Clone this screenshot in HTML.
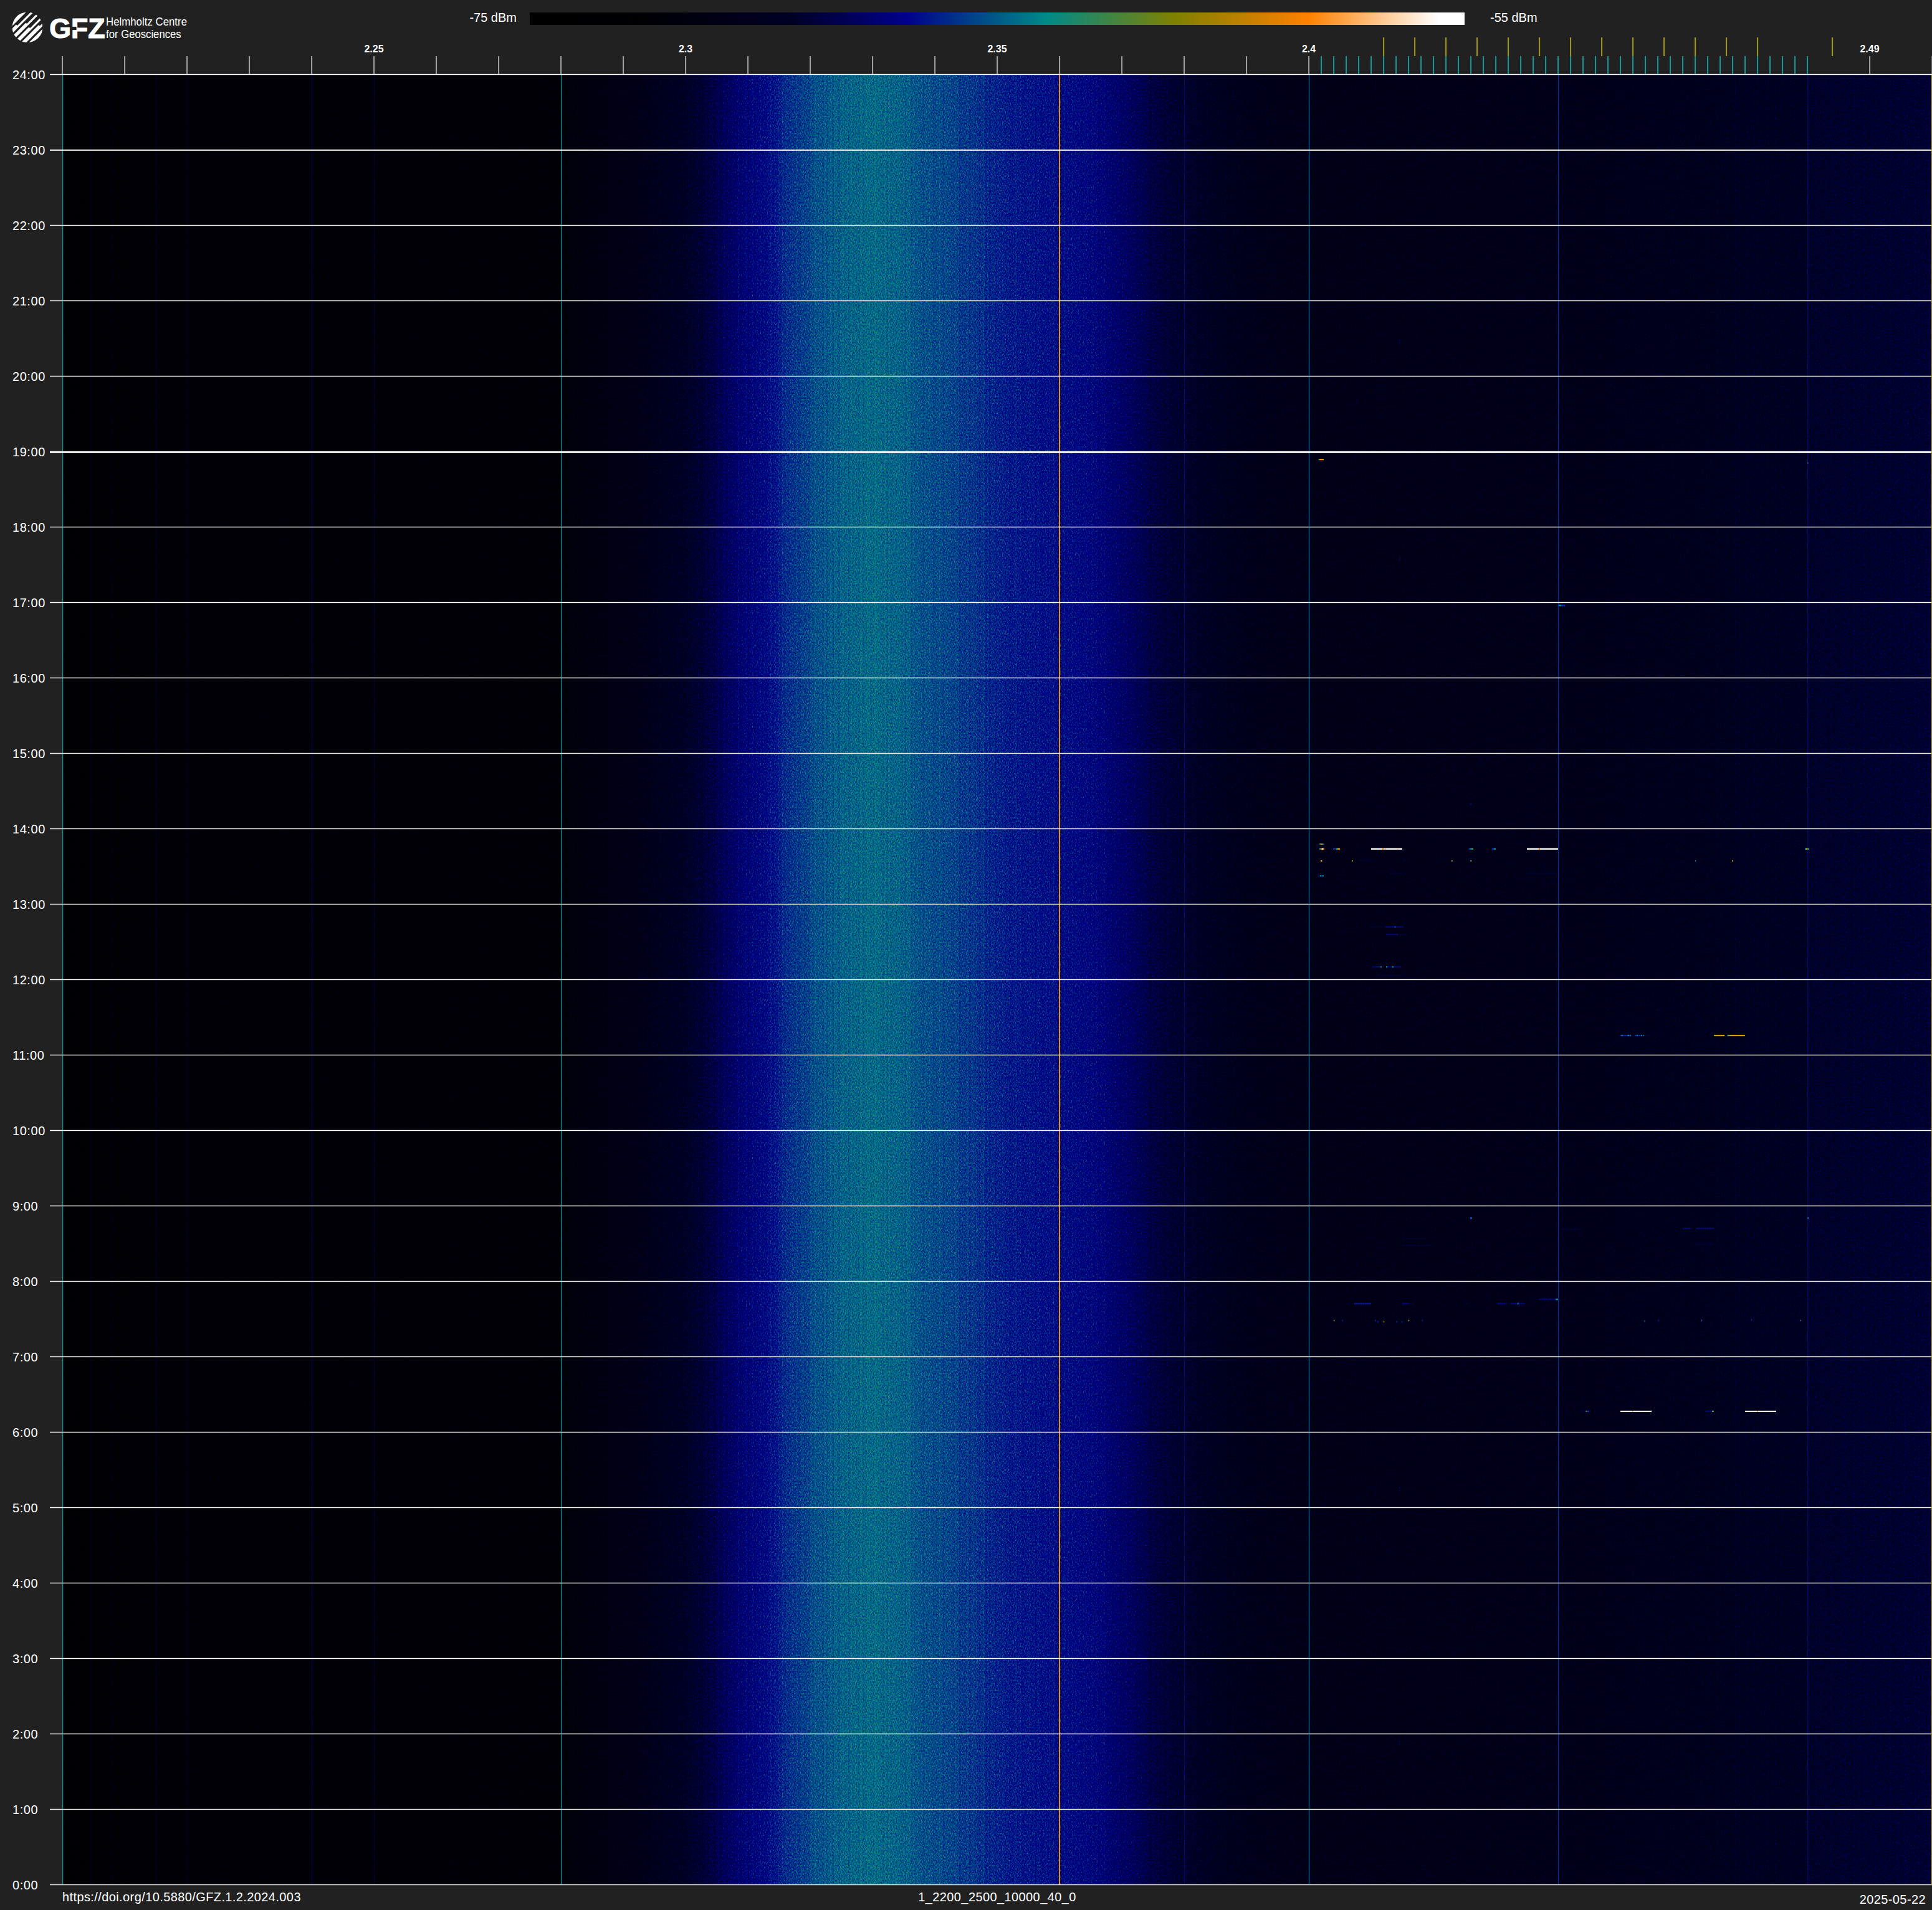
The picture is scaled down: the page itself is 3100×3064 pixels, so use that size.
<!DOCTYPE html>
<html lang="en"><head><meta charset="utf-8"><title>GFZ spectrogram 1_2200_2500_10000_40_0 2025-05-22</title>
<style>
html,body{margin:0;padding:0;background:#212121;}
body{width:3100px;height:3064px;position:relative;font-family:"Liberation Sans",sans-serif;color:#fff;}
.abs{position:absolute;white-space:nowrap;}
.yl{position:absolute;left:20px;font-size:20px;line-height:24px;height:24px;white-space:nowrap;letter-spacing:0.55px;}
.xl{position:absolute;top:68.6px;width:100px;text-align:center;font-size:16px;line-height:20px;font-weight:bold;white-space:nowrap;}
.ft{position:absolute;font-size:20px;line-height:24px;white-space:nowrap;letter-spacing:0.4px;}
</style></head><body>
<div class="abs" style="left:850px;top:20px;width:1500px;height:20px;background:linear-gradient(to right,rgb(0,0,0) 0.00%, rgb(0,0,4) 12.00%, rgb(0,0,38) 28.00%, rgb(0,0,139) 40.25%, rgb(0,138,136) 55.25%, rgb(128,128,0) 69.10%, rgb(255,128,0) 83.30%, rgb(255,255,255) 97.20%, rgb(255,255,255) 100.00%);"></div>
<div class="ft" style="left:629px;width:200px;text-align:right;top:16px;letter-spacing:0;">-75 dBm</div>
<div class="ft" style="left:2391px;top:16px;letter-spacing:0;">-55 dBm</div>
<svg class="abs" style="left:100px;top:119px" width="3000" height="2904" viewBox="0 0 3000 2904"><defs><linearGradient id="prof" x1="0" y1="0" x2="1" y2="0"><stop offset="0.00000" stop-color="rgb(18,18,18)"/><stop offset="0.01333" stop-color="rgb(26,26,26)"/><stop offset="0.05000" stop-color="rgb(32,32,32)"/><stop offset="0.20000" stop-color="rgb(33,33,33)"/><stop offset="0.26633" stop-color="rgb(34,34,34)"/><stop offset="0.26700" stop-color="rgb(38,38,38)"/><stop offset="0.28333" stop-color="rgb(46,46,46)"/><stop offset="0.30000" stop-color="rgb(52,52,52)"/><stop offset="0.31667" stop-color="rgb(60,60,60)"/><stop offset="0.33333" stop-color="rgb(68,68,68)"/><stop offset="0.34333" stop-color="rgb(76,76,76)"/><stop offset="0.35333" stop-color="rgb(87,87,87)"/><stop offset="0.36333" stop-color="rgb(96,96,96)"/><stop offset="0.37667" stop-color="rgb(103,103,103)"/><stop offset="0.37733" stop-color="rgb(105,105,105)"/><stop offset="0.38333" stop-color="rgb(109,109,109)"/><stop offset="0.38400" stop-color="rgb(113,113,113)"/><stop offset="0.39333" stop-color="rgb(119,119,119)"/><stop offset="0.39867" stop-color="rgb(121,121,121)"/><stop offset="0.39933" stop-color="rgb(123,123,123)"/><stop offset="0.41667" stop-color="rgb(130,130,130)"/><stop offset="0.43333" stop-color="rgb(133,133,133)"/><stop offset="0.45000" stop-color="rgb(130,130,130)"/><stop offset="0.45367" stop-color="rgb(129,129,129)"/><stop offset="0.45433" stop-color="rgb(127,127,127)"/><stop offset="0.46667" stop-color="rgb(124,124,124)"/><stop offset="0.47967" stop-color="rgb(121,121,121)"/><stop offset="0.48033" stop-color="rgb(119,119,119)"/><stop offset="0.49300" stop-color="rgb(116,116,116)"/><stop offset="0.49367" stop-color="rgb(114,114,114)"/><stop offset="0.50667" stop-color="rgb(110,110,110)"/><stop offset="0.52000" stop-color="rgb(107,107,107)"/><stop offset="0.53333" stop-color="rgb(105,105,105)"/><stop offset="0.55000" stop-color="rgb(101,101,101)"/><stop offset="0.56000" stop-color="rgb(96,96,96)"/><stop offset="0.57333" stop-color="rgb(88,88,88)"/><stop offset="0.58667" stop-color="rgb(78,78,78)"/><stop offset="0.60000" stop-color="rgb(71,71,71)"/><stop offset="0.61667" stop-color="rgb(64,64,64)"/><stop offset="0.63333" stop-color="rgb(59,59,59)"/><stop offset="0.65000" stop-color="rgb(57,57,57)"/><stop offset="0.66667" stop-color="rgb(55,55,55)"/><stop offset="0.80000" stop-color="rgb(57,57,57)"/><stop offset="0.86667" stop-color="rgb(60,60,60)"/><stop offset="0.89333" stop-color="rgb(62,62,62)"/><stop offset="0.89400" stop-color="rgb(64,64,64)"/><stop offset="0.93300" stop-color="rgb(65,65,65)"/><stop offset="0.93367" stop-color="rgb(70,70,70)"/><stop offset="1.00000" stop-color="rgb(74,74,74)"/></linearGradient><filter id="spec" x="0" y="0" width="100%" height="100%" color-interpolation-filters="sRGB"><feTurbulence type="fractalNoise" baseFrequency="0.83 0.37" numOctaves="2" seed="7" result="n"/><feColorMatrix in="n" type="matrix" values="1 0 0 0 0 1 0 0 0 0 1 0 0 0 0 0 0 0 0 1" result="ng0"/><feComponentTransfer in="ng0" result="ng"><feFuncR type="gamma" exponent="2"/><feFuncG type="gamma" exponent="2"/><feFuncB type="gamma" exponent="2"/></feComponentTransfer><feTurbulence type="fractalNoise" baseFrequency="0.31 0.00002" numOctaves="2" seed="11" result="c0"/><feColorMatrix in="c0" type="matrix" values="1 0 0 0 0 1 0 0 0 0 1 0 0 0 0 0 0 0 0 1" result="cg"/><feComposite in="SourceGraphic" in2="cg" operator="arithmetic" k1="0" k2="1" k3="0.070" k4="-0.0350" result="sc"/><feComposite in="sc" in2="ng" operator="arithmetic" k1="0" k2="1" k3="0.250" k4="-0.0660" result="v"/><feComponentTransfer in="v"><feFuncR type="table" tableValues="0 0 0 0 0 0 0 0 0 0 0 0 0 0 0 0 0 0 0 0 0 0 0 0 0 0 0 0 0 0 0 0 0 0 0 0 0 0 0 0 0 0 0 0 0 0 0 0 0 0 0 0 0 0 0 0 0 0 0 0 0 0 0 0 0 0 0 0 0 0 0 0 0 0 0 0 0 0 0 0 0 0 0 0 0 0 0 0 0 0 0 0 0 0 0 0 0 0 0 0 0 0 0 0 0 0 0 0 0 0 0 0.009061 0.02718 0.0453 0.06342 0.08155 0.09967 0.1178 0.1359 0.154 0.1722 0.1903 0.2084 0.2265 0.2446 0.2628 0.2809 0.299 0.3171 0.3352 0.3534 0.3715 0.3896 0.4077 0.4259 0.444 0.4621 0.4802 0.4983 0.516 0.5335 0.5511 0.5686 0.5861 0.6037 0.6212 0.6387 0.6563 0.6738 0.6914 0.7089 0.7264 0.744 0.7615 0.779 0.7966 0.8141 0.8316 0.8492 0.8667 0.8843 0.9018 0.9193 0.9369 0.9544 0.9719 0.9895 1 1 1 1 1 1 1 1 1 1 1 1 1 1 1 1 1 1 1 1 1 1 1 1 1 1 1 1 1 1 1 1 1 1"/><feFuncG type="table" tableValues="0 0 0 0 0 0 0 0 0 0 0 0 0 0 0 0 0 0 0 0 0 0 0 0 0 0 0 0 0 0 0 0 0 0 0 0 0 0 0 0 0 0 0 0 0 0 0 0 0 0 0 0 0 0 0 0 0 0 0 0 0 0 0 0 0 0 0 0 0 0 0 0 0 0 0 0 0 0 0 0 0 0.00902 0.02706 0.0451 0.06314 0.08118 0.09922 0.1173 0.1353 0.1533 0.1714 0.1894 0.2075 0.2255 0.2435 0.2616 0.2796 0.2976 0.3157 0.3337 0.3518 0.3698 0.3878 0.4059 0.4239 0.442 0.46 0.478 0.4961 0.5141 0.5322 0.5405 0.5391 0.5376 0.5362 0.5348 0.5334 0.532 0.5306 0.5291 0.5277 0.5263 0.5249 0.5235 0.5221 0.5206 0.5192 0.5178 0.5164 0.515 0.5136 0.5122 0.5107 0.5093 0.5079 0.5065 0.5051 0.5037 0.5022 0.502 0.502 0.502 0.502 0.502 0.502 0.502 0.502 0.502 0.502 0.502 0.502 0.502 0.502 0.502 0.502 0.502 0.502 0.502 0.502 0.502 0.502 0.502 0.502 0.502 0.502 0.502 0.502 0.5091 0.527 0.545 0.5629 0.5808 0.5987 0.6166 0.6345 0.6524 0.6704 0.6883 0.7062 0.7241 0.742 0.7599 0.7779 0.7958 0.8137 0.8316 0.8495 0.8674 0.8853 0.9033 0.9212 0.9391 0.957 0.9749 0.9928 1 1 1 1 1 1"/><feFuncB type="table" tableValues="0 0.0006536 0.001307 0.001961 0.002614 0.003268 0.003922 0.004575 0.005229 0.005882 0.006536 0.00719 0.007843 0.008497 0.00915 0.009804 0.01046 0.01111 0.01176 0.01242 0.01307 0.01373 0.01438 0.01503 0.01569 0.01985 0.02402 0.02819 0.03235 0.03652 0.04069 0.04485 0.04902 0.05319 0.05735 0.06152 0.06569 0.06985 0.07402 0.07819 0.08235 0.08652 0.09069 0.09485 0.09902 0.1032 0.1074 0.1115 0.1157 0.1199 0.124 0.1282 0.1324 0.1365 0.1407 0.1449 0.149 0.1652 0.1814 0.1975 0.2137 0.2299 0.246 0.2622 0.2784 0.2945 0.3107 0.3269 0.343 0.3592 0.3754 0.3915 0.4077 0.4238 0.44 0.4562 0.4723 0.4885 0.5047 0.5208 0.537 0.5449 0.5445 0.5441 0.5437 0.5433 0.5429 0.5425 0.5422 0.5418 0.5414 0.541 0.5406 0.5402 0.5398 0.5394 0.539 0.5386 0.5382 0.5378 0.5375 0.5371 0.5367 0.5363 0.5359 0.5355 0.5351 0.5347 0.5343 0.5339 0.5335 0.5237 0.5045 0.4852 0.4659 0.4467 0.4274 0.4082 0.3889 0.3697 0.3504 0.3312 0.3119 0.2927 0.2734 0.2542 0.2349 0.2156 0.1964 0.1771 0.1579 0.1386 0.1194 0.1001 0.08087 0.06161 0.04236 0.0231 0.003851 0 0 0 0 0 0 0 0 0 0 0 0 0 0 0 0 0 0 0 0 0 0 0 0 0 0 0 0 0.01439 0.05036 0.08633 0.1223 0.1583 0.1942 0.2302 0.2662 0.3022 0.3381 0.3741 0.4101 0.446 0.482 0.518 0.554 0.5899 0.6259 0.6619 0.6978 0.7338 0.7698 0.8058 0.8417 0.8777 0.9137 0.9496 0.9856 1 1 1 1 1 1"/></feComponentTransfer></filter></defs><rect x="0" y="0" width="3000" height="2904" fill="url(#prof)" filter="url(#spec)"/></svg>
<svg class="abs" style="left:0;top:0" width="3100" height="3064" viewBox="0 0 3100 3064"><defs><linearGradient id="gy" x1="0" x2="1" y1="0" y2="0"><stop offset="0" stop-color="#8aa020"/><stop offset=".2" stop-color="#c8a800"/><stop offset=".45" stop-color="#f09000"/><stop offset=".6" stop-color="#c0a800"/><stop offset=".8" stop-color="#e89800"/><stop offset="1" stop-color="#a8a410"/></linearGradient></defs><rect x="2117" y="1360.6" width="2" height="2.4" fill="#009090"/><rect x="2119" y="1360.6" width="2" height="2.4" fill="#ff8c00"/><rect x="2121" y="1360.6" width="2" height="2.4" fill="#ffffff"/><rect x="2123" y="1360.6" width="2" height="2.4" fill="#ff8c00"/><rect x="2139" y="1360.6" width="3" height="2.4" fill="#0a2ab8"/><rect x="2143" y="1360.6" width="3" height="2.4" fill="#009090"/><rect x="2146" y="1360.6" width="2" height="2.4" fill="#c4ae00"/><rect x="2148" y="1360.6" width="2" height="2.4" fill="#ff8c00"/><rect x="2200" y="1360.6" width="50" height="2.4" fill="#ffffff"/><rect x="2218" y="1360.6" width="2" height="2.4" fill="#ff8c00"/><rect x="2222" y="1360.6" width="1" height="2.4" fill="#ff8c00"/><rect x="2242" y="1360.6" width="1" height="2.4" fill="#ffc070"/><rect x="2357" y="1360.6" width="2" height="2.4" fill="#0a2ab8"/><rect x="2359" y="1360.6" width="3" height="2.4" fill="#009090"/><rect x="2362" y="1360.6" width="2" height="2.4" fill="#4aa04a"/><rect x="2394" y="1360.6" width="3" height="2.4" fill="#0a2ab8"/><rect x="2397" y="1360.6" width="3" height="2.4" fill="#009090"/><rect x="2450" y="1360.6" width="50" height="2.4" fill="#ffffff"/><rect x="2469" y="1360.6" width="2" height="2.4" fill="#ff8c00"/><rect x="2896" y="1360.6" width="2" height="2.4" fill="#009090"/><rect x="2898" y="1360.6" width="3" height="2.4" fill="#c4ae00"/><rect x="2901" y="1360.6" width="1" height="2.4" fill="#4aa04a"/><rect x="2902" y="1360.6" width="1" height="2.4" fill="#009090"/><rect x="2117" y="1353.2" width="2" height="1.8" fill="#009090"/><rect x="2119" y="1353.2" width="3" height="1.8" fill="#e09a00"/><rect x="2122" y="1353.2" width="2" height="1.8" fill="#009090"/><rect x="2119" y="1380" width="2.4" height="2.2" fill="#ffb050"/><rect x="2169" y="1380" width="1.6" height="2.2" fill="#c4ae00"/><rect x="2329" y="1380" width="1.6" height="2.2" fill="#a0b020"/><rect x="2359" y="1380" width="1" height="2.2" fill="#009090"/><rect x="2360" y="1380" width="1" height="2.2" fill="#c4ae00"/><rect x="2720" y="1380" width="1.2" height="2.2" fill="#009090"/><rect x="2779" y="1380" width="1.6" height="2.2" fill="#c4ae00"/><rect x="2115" y="1404" width="2" height="2.2" fill="#000a90"/><rect x="2118" y="1404" width="2" height="2.2" fill="#009090"/><rect x="2120" y="1404" width="2" height="2.2" fill="#0a2ab8"/><rect x="2122" y="1404" width="2" height="2.2" fill="#009090"/><line x1="2180" y1="1379.5" x2="2200" y2="1379.5" stroke="rgba(0,16,150,0.33)" stroke-width="2" stroke-dasharray="1.6 1.4"/><line x1="2251" y1="1379.5" x2="2261" y2="1379.5" stroke="rgba(0,16,150,0.33)" stroke-width="2" stroke-dasharray="1.6 1.4"/><line x1="2230" y1="1401.2" x2="2251" y2="1401.2" stroke="rgba(0,16,150,0.33)" stroke-width="2" stroke-dasharray="1.6 1.4"/><line x1="2450" y1="1401.2" x2="2497" y2="1401.2" stroke="rgba(0,16,150,0.33)" stroke-width="2" stroke-dasharray="1.6 1.4"/><rect x="2115.6" y="736" width="1.5" height="2.2" fill="#009090"/><rect x="2117" y="736" width="5" height="2.2" fill="#ff8c00"/><rect x="2122" y="736" width="2" height="2.2" fill="#c4ae00"/><rect x="2900" y="741.5" width="1.5" height="2" fill="#4aa04a"/><rect x="2501" y="970" width="4" height="2.5" fill="#009090"/><rect x="2505" y="970" width="6" height="2.5" fill="#0a2ab8"/><line x1="2511" y1="971.25" x2="2519" y2="971.25" stroke="rgba(0,16,150,0.33)" stroke-width="2.5" stroke-dasharray="1.6 1.4"/><rect x="2245" y="545" width="1" height="2" fill="#000a90"/><rect x="2245" y="549" width="1" height="2" fill="#000a90"/><rect x="2245" y="893" width="1" height="2" fill="#000a90"/><rect x="2245" y="897" width="1" height="2" fill="#000a90"/><rect x="2245" y="2386" width="1" height="2" fill="#000a90"/><rect x="2245" y="2390" width="1" height="2" fill="#000a90"/><rect x="2245" y="2793" width="1" height="2" fill="#000a90"/><rect x="2245" y="2797" width="1" height="2" fill="#000a90"/><rect x="2359" y="1289" width="2" height="2.4" fill="#000a90"/><rect x="2359" y="1952.5" width="3" height="3" fill="#1050c0"/><rect x="2900" y="1952.5" width="2" height="3" fill="#1080b0"/><line x1="2700" y1="1970.6" x2="2714" y2="1970.6" stroke="rgba(0,24,170,0.7)" stroke-width="2.2" stroke-dasharray="2.4 0.8"/><line x1="2722" y1="1970.6" x2="2750" y2="1970.6" stroke="rgba(0,24,170,0.7)" stroke-width="2.2" stroke-dasharray="2.4 0.8"/><line x1="2720" y1="1995.6" x2="2749" y2="1995.6" stroke="rgba(0,16,150,0.33)" stroke-width="2.2" stroke-dasharray="1.6 1.4"/><line x1="2250" y1="1987" x2="2289" y2="1987" stroke="rgba(0,16,150,0.33)" stroke-width="2" stroke-dasharray="1.6 1.4"/><line x1="2250" y1="1998" x2="2299" y2="1998" stroke="rgba(0,16,150,0.33)" stroke-width="2" stroke-dasharray="1.6 1.4"/><line x1="2505" y1="1972" x2="2538" y2="1972" stroke="rgba(0,16,150,0.33)" stroke-width="2" stroke-dasharray="1.6 1.4"/><line x1="2600" y1="1661.1" x2="2617" y2="1661.1" stroke="#0a2ab8" stroke-width="2.2" stroke-dasharray="2.4 0.8"/><rect x="2602" y="1660" width="1.5" height="2.2" fill="#009090"/><rect x="2612" y="1660" width="2" height="2.2" fill="#009090"/><rect x="2616" y="1660" width="1" height="2.2" fill="#009090"/><line x1="2623" y1="1661.1" x2="2637" y2="1661.1" stroke="#0a2ab8" stroke-width="2.2" stroke-dasharray="2.4 0.8"/><rect x="2626" y="1660" width="1.5" height="2.2" fill="#009090"/><rect x="2633" y="1660" width="1.5" height="2.2" fill="#009090"/><rect x="2636" y="1660" width="1.5" height="2.2" fill="#009090"/><line x1="2637" y1="1661.1" x2="2649" y2="1661.1" stroke="rgba(0,16,150,0.33)" stroke-width="2.2" stroke-dasharray="1.6 1.4"/><rect x="2750" y="1660" width="17.3" height="2.2" fill="url(#gy)"/><rect x="2771" y="1660" width="1.4" height="2.2" fill="#009090"/><rect x="2773" y="1660" width="27" height="2.2" fill="url(#gy)"/><rect x="2600" y="2263" width="50" height="2" fill="#ffffff"/><rect x="2619" y="2263" width="1.2" height="2" fill="#ff8c00"/><rect x="2800" y="2263" width="50" height="2" fill="#ffffff"/><rect x="2819" y="2263" width="1.6" height="2" fill="#ff8c00"/><line x1="2534" y1="2264" x2="2544" y2="2264" stroke="rgba(0,16,150,0.33)" stroke-width="2" stroke-dasharray="1.6 1.4"/><rect x="2544.5" y="2263" width="1.5" height="2" fill="#4aa04a"/><rect x="2546" y="2263" width="4" height="2" fill="#0a2ab8"/><line x1="2737" y1="2264" x2="2747" y2="2264" stroke="#000a90" stroke-width="2" stroke-dasharray="2.4 0.8"/><rect x="2747" y="2263" width="3" height="2" fill="#4aa04a"/><line x1="2173" y1="2091.3" x2="2200" y2="2091.3" stroke="#0a18a8" stroke-width="2.6" stroke-dasharray="2.4 0.8"/><line x1="2250" y1="2091.3" x2="2260" y2="2091.3" stroke="#000a90" stroke-width="2.6" stroke-dasharray="2.4 0.8"/><line x1="2260" y1="2091.3" x2="2268" y2="2091.3" stroke="rgba(0,16,150,0.33)" stroke-width="2.6" stroke-dasharray="1.6 1.4"/><line x1="2350" y1="2091.3" x2="2357" y2="2091.3" stroke="rgba(0,16,150,0.33)" stroke-width="2.6" stroke-dasharray="1.6 1.4"/><line x1="2403" y1="2091.3" x2="2417" y2="2091.3" stroke="#000a90" stroke-width="2.6" stroke-dasharray="2.4 0.8"/><line x1="2424" y1="2091.3" x2="2447" y2="2091.3" stroke="#000a90" stroke-width="2.6" stroke-dasharray="2.4 0.8"/><rect x="2435" y="2090" width="1.5" height="2.6" fill="#009090"/><line x1="2470" y1="2084.45" x2="2498" y2="2084.45" stroke="#000a90" stroke-width="2.3" stroke-dasharray="2.4 0.8"/><rect x="2496" y="2083.3" width="4" height="2.3" fill="#009090"/><rect x="2140" y="2117" width="1.2" height="2.6" fill="#e0d060"/><rect x="2220" y="2119" width="1.2" height="2.6" fill="#c4ae00"/><rect x="2260" y="2117" width="1.2" height="2.6" fill="#c4ae00"/><rect x="2153.5" y="2117" width="1.2" height="2.6" fill="#0a2ab8"/><rect x="2206.5" y="2117" width="1.2" height="2.6" fill="#0a2ab8"/><rect x="2210.6" y="2119" width="1.2" height="2.6" fill="#0a2ab8"/><rect x="2240.5" y="2119" width="1.2" height="2.6" fill="#0a2ab8"/><rect x="2249" y="2119" width="1.2" height="2.6" fill="#0a2ab8"/><rect x="2281.7" y="2117" width="1.2" height="2.6" fill="#0a2ab8"/><rect x="2638.5" y="2118" width="1.2" height="2.6" fill="#009090"/><rect x="2660.6" y="2117" width="1.2" height="2.6" fill="#0a2ab8"/><rect x="2730" y="2117" width="1.2" height="2.6" fill="#2060c0"/><rect x="2810" y="2116" width="1.2" height="2.6" fill="#0a2ab8"/><rect x="2888.5" y="2117" width="1.2" height="2.6" fill="#009090"/><line x1="2198" y1="1487" x2="2217" y2="1487" stroke="rgba(0,16,150,0.33)" stroke-width="2" stroke-dasharray="1.6 1.4"/><line x1="2223" y1="1487" x2="2252.5" y2="1487" stroke="#000a90" stroke-width="2" stroke-dasharray="2.4 0.8"/><rect x="2237" y="1486" width="3" height="2" fill="#0a2ab8"/><line x1="2224.5" y1="1499" x2="2243" y2="1499" stroke="#000a90" stroke-width="2" stroke-dasharray="2.4 0.8"/><line x1="2246" y1="1499" x2="2260" y2="1499" stroke="rgba(0,16,150,0.33)" stroke-width="2" stroke-dasharray="1.6 1.4"/><line x1="2202" y1="1551.1" x2="2217" y2="1551.1" stroke="#000a90" stroke-width="2.2" stroke-dasharray="2.4 0.8"/><rect x="2215" y="1550" width="2" height="2.2" fill="#009090"/><rect x="2224" y="1550" width="2" height="2.2" fill="#009090"/><line x1="2226" y1="1551.1" x2="2248" y2="1551.1" stroke="#000a90" stroke-width="2.2" stroke-dasharray="2.4 0.8"/><rect x="2234" y="1550" width="2" height="2.2" fill="#009090"/><line x1="2210" y1="1565" x2="2251" y2="1565" stroke="rgba(0,16,150,0.33)" stroke-width="2" stroke-dasharray="1.6 1.4"/><rect x="144.9" y="119" width="1.2" height="2904" fill="rgba(0,0,110,0.3)"/><rect x="179.9" y="119" width="1.2" height="2904" fill="rgba(0,0,110,0.3)"/><rect x="249.9" y="119" width="1.2" height="2904" fill="rgba(0,0,120,0.35)"/><rect x="299.9" y="119" width="1.2" height="2904" fill="rgba(0,0,110,0.3)"/><rect x="499.9" y="119" width="1.2" height="2904" fill="rgba(0,0,170,0.5)"/><rect x="599.9" y="119" width="1.2" height="2904" fill="rgba(0,0,120,0.5)"/><rect x="1899.9" y="119" width="1.2" height="2904" fill="rgba(10,20,170,0.55)"/><rect x="2499.9" y="119" width="1.2" height="2904" fill="rgba(10,52,184,0.85)"/><rect x="2899.9" y="119" width="1.2" height="2904" fill="rgba(10,20,170,0.5)"/><rect x="99.9" y="119" width="1.3" height="2904" fill="#0c9494"/><rect x="899.9" y="119" width="1.3" height="2904" fill="#0c9494"/><rect x="2099.9" y="119" width="1.3" height="2904" fill="#08669a"/><rect x="1699" y="119" width="2" height="2904" fill="#ee8a00"/><rect x="80" y="118.8" width="3020" height="1.4" fill="#fff"/><rect x="80" y="239.8" width="3020" height="2" fill="#fff"/><rect x="80" y="360.8" width="3020" height="1.4" fill="#fff"/><rect x="80" y="481.8" width="3020" height="1.4" fill="#fff"/><rect x="80" y="602.8" width="3020" height="1.4" fill="#fff"/><rect x="80" y="723.8" width="3020" height="3" fill="#fff"/><rect x="80" y="844.8" width="3020" height="1.4" fill="#fff"/><rect x="80" y="965.8" width="3020" height="1.4" fill="#fff"/><rect x="80" y="1086.8" width="3020" height="1.4" fill="#fff"/><rect x="80" y="1207.8" width="3020" height="1.4" fill="#fff"/><rect x="80" y="1328.8" width="3020" height="1.4" fill="#fff"/><rect x="80" y="1449.8" width="3020" height="1.4" fill="#fff"/><rect x="80" y="1570.8" width="3020" height="1.4" fill="#fff"/><rect x="80" y="1691.8" width="3020" height="1.4" fill="#fff"/><rect x="80" y="1812.8" width="3020" height="1.4" fill="#fff"/><rect x="80" y="1933.8" width="3020" height="1.4" fill="#fff"/><rect x="80" y="2054.8" width="3020" height="1.4" fill="#fff"/><rect x="80" y="2175.8" width="3020" height="1.4" fill="#fff"/><rect x="80" y="2296.8" width="3020" height="1.4" fill="#fff"/><rect x="80" y="2417.8" width="3020" height="1.4" fill="#fff"/><rect x="80" y="2538.8" width="3020" height="1.4" fill="#fff"/><rect x="80" y="2659.8" width="3020" height="1.4" fill="#fff"/><rect x="80" y="2780.8" width="3020" height="1.4" fill="#fff"/><rect x="80" y="2901.8" width="3020" height="1.4" fill="#fff"/><rect x="80" y="3022.8" width="3020" height="1.4" fill="#fff"/><rect x="99.1" y="90" width="2" height="29" fill="#a4a4a4"/><rect x="199.1" y="90" width="2" height="29" fill="#a4a4a4"/><rect x="299.1" y="90" width="2" height="29" fill="#a4a4a4"/><rect x="399.1" y="90" width="2" height="29" fill="#a4a4a4"/><rect x="499.1" y="90" width="2" height="29" fill="#a4a4a4"/><rect x="599.1" y="90" width="2" height="29" fill="#a4a4a4"/><rect x="699.1" y="90" width="2" height="29" fill="#a4a4a4"/><rect x="799.1" y="90" width="2" height="29" fill="#a4a4a4"/><rect x="899.1" y="90" width="2" height="29" fill="#a4a4a4"/><rect x="999.1" y="90" width="2" height="29" fill="#a4a4a4"/><rect x="1099.1" y="90" width="2" height="29" fill="#a4a4a4"/><rect x="1199.1" y="90" width="2" height="29" fill="#a4a4a4"/><rect x="1299.1" y="90" width="2" height="29" fill="#a4a4a4"/><rect x="1399.1" y="90" width="2" height="29" fill="#a4a4a4"/><rect x="1499.1" y="90" width="2" height="29" fill="#a4a4a4"/><rect x="1599.1" y="90" width="2" height="29" fill="#a4a4a4"/><rect x="1699.1" y="90" width="2" height="29" fill="#a4a4a4"/><rect x="1799.1" y="90" width="2" height="29" fill="#a4a4a4"/><rect x="1899.1" y="90" width="2" height="29" fill="#a4a4a4"/><rect x="1999.1" y="90" width="2" height="29" fill="#a4a4a4"/><rect x="2099.1" y="90" width="2" height="29" fill="#a4a4a4"/><rect x="2999.1" y="90" width="2" height="29" fill="#a4a4a4"/><rect x="3099.4" y="90" width="1" height="29" fill="#a8a8a8"/><rect x="3099" y="120" width="1" height="2904" fill="#c8a000"/><rect x="2119.1" y="90" width="2" height="29" fill="#1a9a9a"/><rect x="2139.1" y="90" width="2" height="29" fill="#1a9a9a"/><rect x="2159.1" y="90" width="2" height="29" fill="#1a9a9a"/><rect x="2179.1" y="90" width="2" height="29" fill="#1a9a9a"/><rect x="2199.1" y="90" width="2" height="29" fill="#1a9a9a"/><rect x="2219.1" y="90" width="2" height="29" fill="#1a9a9a"/><rect x="2239.1" y="90" width="2" height="29" fill="#1a9a9a"/><rect x="2259.1" y="90" width="2" height="29" fill="#1a9a9a"/><rect x="2279.1" y="90" width="2" height="29" fill="#1a9a9a"/><rect x="2299.1" y="90" width="2" height="29" fill="#1a9a9a"/><rect x="2319.1" y="90" width="2" height="29" fill="#1a9a9a"/><rect x="2339.1" y="90" width="2" height="29" fill="#1a9a9a"/><rect x="2359.1" y="90" width="2" height="29" fill="#1a9a9a"/><rect x="2379.1" y="90" width="2" height="29" fill="#1a9a9a"/><rect x="2399.1" y="90" width="2" height="29" fill="#1a9a9a"/><rect x="2419.1" y="90" width="2" height="29" fill="#1a9a9a"/><rect x="2439.1" y="90" width="2" height="29" fill="#1a9a9a"/><rect x="2459.1" y="90" width="2" height="29" fill="#1a9a9a"/><rect x="2479.1" y="90" width="2" height="29" fill="#1a9a9a"/><rect x="2499.1" y="90" width="2" height="29" fill="#1a9a9a"/><rect x="2519.1" y="90" width="2" height="29" fill="#1a9a9a"/><rect x="2539.1" y="90" width="2" height="29" fill="#1a9a9a"/><rect x="2559.1" y="90" width="2" height="29" fill="#1a9a9a"/><rect x="2579.1" y="90" width="2" height="29" fill="#1a9a9a"/><rect x="2599.1" y="90" width="2" height="29" fill="#1a9a9a"/><rect x="2619.1" y="90" width="2" height="29" fill="#1a9a9a"/><rect x="2639.1" y="90" width="2" height="29" fill="#1a9a9a"/><rect x="2659.1" y="90" width="2" height="29" fill="#1a9a9a"/><rect x="2679.1" y="90" width="2" height="29" fill="#1a9a9a"/><rect x="2699.1" y="90" width="2" height="29" fill="#1a9a9a"/><rect x="2719.1" y="90" width="2" height="29" fill="#1a9a9a"/><rect x="2739.1" y="90" width="2" height="29" fill="#1a9a9a"/><rect x="2759.1" y="90" width="2" height="29" fill="#1a9a9a"/><rect x="2779.1" y="90" width="2" height="29" fill="#1a9a9a"/><rect x="2799.1" y="90" width="2" height="29" fill="#1a9a9a"/><rect x="2819.1" y="90" width="2" height="29" fill="#1a9a9a"/><rect x="2839.1" y="90" width="2" height="29" fill="#1a9a9a"/><rect x="2859.1" y="90" width="2" height="29" fill="#1a9a9a"/><rect x="2879.1" y="90" width="2" height="29" fill="#1a9a9a"/><rect x="2899.1" y="90" width="2" height="29" fill="#1a9a9a"/><rect x="2219.1" y="60" width="2" height="30" fill="#a39a12"/><rect x="2269.1" y="60" width="2" height="30" fill="#a39a12"/><rect x="2319.1" y="60" width="2" height="30" fill="#a39a12"/><rect x="2369.1" y="60" width="2" height="30" fill="#a39a12"/><rect x="2419.1" y="60" width="2" height="30" fill="#a39a12"/><rect x="2469.1" y="60" width="2" height="30" fill="#a39a12"/><rect x="2519.1" y="60" width="2" height="30" fill="#a39a12"/><rect x="2569.1" y="60" width="2" height="30" fill="#a39a12"/><rect x="2619.1" y="60" width="2" height="30" fill="#a39a12"/><rect x="2669.1" y="60" width="2" height="30" fill="#a39a12"/><rect x="2719.1" y="60" width="2" height="30" fill="#a39a12"/><rect x="2769.1" y="60" width="2" height="30" fill="#a39a12"/><rect x="2819.1" y="60" width="2" height="30" fill="#a39a12"/><rect x="2939.1" y="60" width="2" height="30" fill="#a39a12"/></svg>
<div class="xl" style="left:550px">2.25</div><div class="xl" style="left:1050px">2.3</div><div class="xl" style="left:1550px">2.35</div><div class="xl" style="left:2050px">2.4</div><div class="xl" style="left:2950px">2.49</div>
<div class="yl" style="top:107.9px">24:00</div><div class="yl" style="top:228.9px">23:00</div><div class="yl" style="top:349.9px">22:00</div><div class="yl" style="top:470.9px">21:00</div><div class="yl" style="top:591.9px">20:00</div><div class="yl" style="top:712.9px">19:00</div><div class="yl" style="top:833.9px">18:00</div><div class="yl" style="top:954.9px">17:00</div><div class="yl" style="top:1075.9px">16:00</div><div class="yl" style="top:1196.9px">15:00</div><div class="yl" style="top:1317.9px">14:00</div><div class="yl" style="top:1438.9px">13:00</div><div class="yl" style="top:1559.9px">12:00</div><div class="yl" style="top:1680.9px">11:00</div><div class="yl" style="top:1801.9px">10:00</div><div class="yl" style="top:1922.9px">9:00</div><div class="yl" style="top:2043.9px">8:00</div><div class="yl" style="top:2164.9px">7:00</div><div class="yl" style="top:2285.9px">6:00</div><div class="yl" style="top:2406.9px">5:00</div><div class="yl" style="top:2527.9px">4:00</div><div class="yl" style="top:2648.9px">3:00</div><div class="yl" style="top:2769.9px">2:00</div><div class="yl" style="top:2890.9px">1:00</div><div class="yl" style="top:3011.9px">0:00</div>
<div class="ft" style="left:100px;top:3031px;">https://doi.org/10.5880/GFZ.1.2.2024.003</div>
<div class="ft" style="left:1400px;width:400px;text-align:center;top:3031px;">1_2200_2500_10000_40_0</div>
<div class="ft" style="left:2790px;width:300px;text-align:right;top:3035px;">2025-05-22</div>
<svg class="abs" style="left:0;top:0" width="340" height="90" viewBox="0 0 340 90"><defs><clipPath id="lc"><circle cx="44" cy="43.8" r="24.4"/></clipPath></defs><g clip-path="url(#lc)" fill="#fff"><polygon points="8,8 53.3,8 8,53.3"/><polygon points="8.00,57.23 25.70,39.53 27.90,40.94 82.00,-13.16 82.00,-8.70 8.00,65.30"/><polygon points="8.00,69.95 41.20,36.75 43.40,37.69 82.00,-0.91 82.00,3.49 8.00,77.49"/><polygon points="8.00,81.95 46.10,43.85 48.30,45.05 82.00,11.35 82.00,15.81 8.00,89.81"/><polygon points="8.00,93.99 61.80,40.19 64.00,41.60 82.00,23.60 82.00,28.30 8.00,102.30"/><polygon points="82,82 82,32.7 32.7,82"/></g><text x="79.3" y="60.8" font-family="Liberation Sans, sans-serif" font-weight="bold" font-size="44.6" fill="#fff" stroke="#fff" stroke-width="1.2">GFZ</text><rect x="114" y="42.9" width="8.6" height="5.2" fill="#212121"/><text x="170" y="41" font-family="Liberation Sans, sans-serif" font-size="17.5" fill="#fff" textLength="130" lengthAdjust="spacingAndGlyphs">Helmholtz Centre</text><text x="170" y="61" font-family="Liberation Sans, sans-serif" font-size="17.5" fill="#fff" textLength="120.7" lengthAdjust="spacingAndGlyphs">for Geosciences</text></svg>
</body></html>
